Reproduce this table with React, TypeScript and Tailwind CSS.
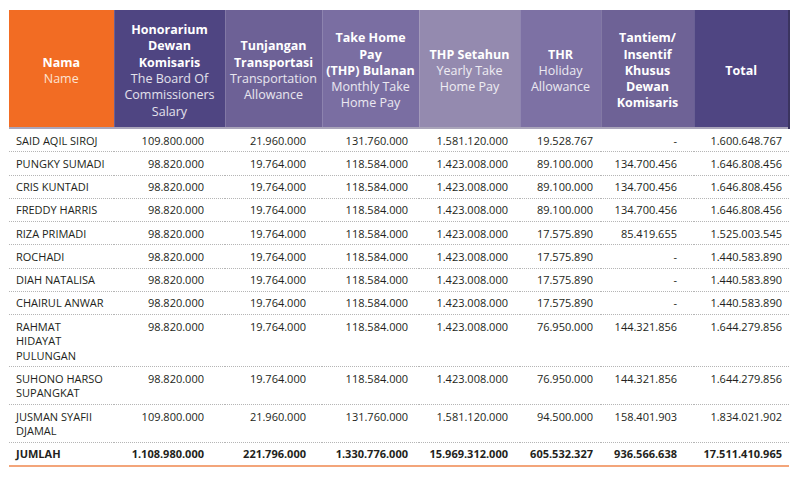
import React from 'react';

type Col = {
  title: string[];
  sub: string[];
  bg: string;
  w: string;
  pr: string;
};

const cols: Col[] = [
  { title: ['Honorarium', 'Dewan', 'Komisaris'], sub: ['The Board Of', 'Commissioners', 'Salary'], bg: 'bg-[#4f4582]', w: 'w-[111px]', pr: 'pr-[21px]' },
  { title: ['Tunjangan', 'Transportasi'], sub: ['Transportation', 'Allowance'], bg: 'bg-[#6d6196]', w: 'w-[97px]', pr: 'pr-[16px]' },
  { title: ['Take Home', 'Pay', '(THP) Bulanan'], sub: ['Monthly Take', 'Home Pay'], bg: 'bg-[#7a6ea2]', w: 'w-[97px]', pr: 'pr-[11px]' },
  { title: ['THP Setahun'], sub: ['Yearly Take', 'Home Pay'], bg: 'bg-[#948aaf]', w: 'w-[101px]', pr: 'pr-[12px]' },
  { title: ['THR'], sub: ['Holiday', 'Allowance'], bg: 'bg-[#7d71a4]', w: 'w-[81px]', pr: 'pr-[8px]' },
  { title: ['Tantiem/', 'Insentif', 'Khusus', 'Dewan', 'Komisaris'], sub: [], bg: 'bg-[#6e6296]', w: 'w-[93px]', pr: 'pr-[17px]' },
  { title: ['Total'], sub: [], bg: 'bg-[#4f4582]', w: 'w-[95px]', pr: 'pr-[7px]' },
];

const rows: { name: string[]; v: string[] }[] = [
  { name: ['SAID AQIL SIROJ'], v: ['109.800.000', '21.960.000', '131.760.000', '1.581.120.000', '19.528.767', '-', '1.600.648.767'] },
  { name: ['PUNGKY SUMADI'], v: ['98.820.000', '19.764.000', '118.584.000', '1.423.008.000', '89.100.000', '134.700.456', '1.646.808.456'] },
  { name: ['CRIS KUNTADI'], v: ['98.820.000', '19.764.000', '118.584.000', '1.423.008.000', '89.100.000', '134.700.456', '1.646.808.456'] },
  { name: ['FREDDY HARRIS'], v: ['98.820.000', '19.764.000', '118.584.000', '1.423.008.000', '89.100.000', '134.700.456', '1.646.808.456'] },
  { name: ['RIZA PRIMADI'], v: ['98.820.000', '19.764.000', '118.584.000', '1.423.008.000', '17.575.890', '85.419.655', '1.525.003.545'] },
  { name: ['ROCHADI'], v: ['98.820.000', '19.764.000', '118.584.000', '1.423.008.000', '17.575.890', '-', '1.440.583.890'] },
  { name: ['DIAH NATALISA'], v: ['98.820.000', '19.764.000', '118.584.000', '1.423.008.000', '17.575.890', '-', '1.440.583.890'] },
  { name: ['CHAIRUL ANWAR'], v: ['98.820.000', '19.764.000', '118.584.000', '1.423.008.000', '17.575.890', '-', '1.440.583.890'] },
  { name: ['RAHMAT', 'HIDAYAT', 'PULUNGAN'], v: ['98.820.000', '19.764.000', '118.584.000', '1.423.008.000', '76.950.000', '144.321.856', '1.644.279.856'] },
  { name: ['SUHONO HARSO', 'SUPANGKAT'], v: ['98.820.000', '19.764.000', '118.584.000', '1.423.008.000', '76.950.000', '144.321.856', '1.644.279.856'] },
  { name: ['JUSMAN SYAFII', 'DJAMAL'], v: ['109.800.000', '21.960.000', '131.760.000', '1.581.120.000', '94.500.000', '158.401.903', '1.834.021.902'] },
];

const totals = ['1.108.980.000', '221.796.000', '1.330.776.000', '15.969.312.000', '605.532.327', '936.566.638', '17.511.410.965'];

const Lines = ({ lines }: { lines: string[] }) => (
  <>
    {lines.map((l, i) => (
      <div key={i}>{l}</div>
    ))}
  </>
);

export default function App() {
  return (
    <div className="w-[802px] h-[484px] bg-white pt-[10px] pl-[9px] font-['Open_Sans',sans-serif] text-[#231f20]">
      <table className="w-[780px] border-collapse table-fixed">
        <thead>
          <tr className="h-[118px] border-b-2 border-[#aaa5ba]">
            <th className="w-[105px] bg-[#f26c23] pt-[5px] text-center align-middle text-[12.5px] leading-[16.3px] text-white">
              <div className="font-bold">Nama</div>
              <div className="font-normal text-[#fde3d2]">Name</div>
            </th>
            {cols.map((c, i) => (
              <th
                key={i}
                className={`${c.w} ${c.bg} ${i === cols.length - 1 ? 'border-r-2 border-r-[#3b345f]' : ''} border-l border-white/15 px-[2px] pt-[5px] text-center align-middle text-[12.5px] leading-[16.3px] text-white`}
              >
                <div className="font-bold">
                  <Lines lines={c.title} />
                </div>
                <div className="font-normal text-white/85">
                  <Lines lines={c.sub} />
                </div>
              </th>
            ))}
          </tr>
        </thead>
        <tbody className="text-[11px] leading-[14.5px]">
          {rows.map((r, i) => (
            <tr key={i} className="border-b border-dotted border-[#b5b5b5] align-top">
              <td className="pl-[7px] pt-[4.5px] pb-[3.25px] text-left">
                <Lines lines={r.name} />
              </td>
              {r.v.map((v, j) => (
                <td key={j} className={`${cols[j].pr} pt-[4.5px] pb-[3.25px] text-right`}>
                  {v}
                </td>
              ))}
            </tr>
          ))}
          <tr className="border-b-2 border-[#f3a57a] font-bold">
            <td className="pl-[7px] pt-[4.5px] pb-[3.25px] text-left">JUMLAH</td>
            {totals.map((v, j) => (
              <td key={j} className={`${cols[j].pr} pt-[4.5px] pb-[3.25px] text-right`}>
                {v}
              </td>
            ))}
          </tr>
        </tbody>
      </table>
    </div>
  );
}
